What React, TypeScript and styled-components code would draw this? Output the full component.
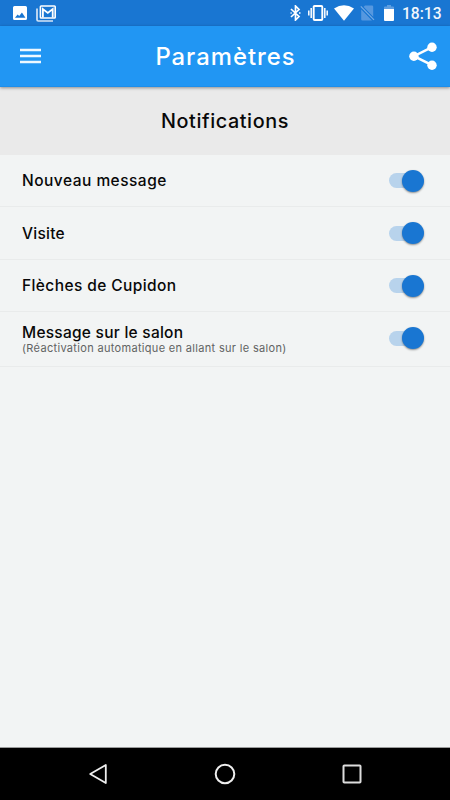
import React from "react";
import styled, { createGlobalStyle } from "styled-components";

const GlobalStyle = createGlobalStyle`
  * { box-sizing: border-box; }
  body { margin: 0; background: #f2f4f4; }
`;

const Screen = styled.div`
  width: 450px;
  height: 800px;
  display: flex;
  flex-direction: column;
  overflow: hidden;
  background: #f2f4f4;
  color: #080808;
  font-family: Inter, "Open Sans", sans-serif;
`;

const StatusBar = styled.header`
  height: 26px;
  flex: none;
  display: flex;
  align-items: center;
  justify-content: space-between;
  padding: 0 9px 0 13px;
  background: #1976d2;
`;

const StatusGroup = styled.div<{ $gap: number }>`
  display: flex;
  align-items: center;
  gap: ${(p) => p.$gap}px;
`;

const Glyph = styled.svg<{ $before?: number }>`
  display: block;
  flex: none;
  margin-left: ${(p) => p.$before ?? 0}px;
`;

const Clock = styled.time`
  width: 39px;
  margin-left: 8px;
  font: 500 15.6px/26px Roboto, sans-serif;
  padding-top: 1px;
  color: #f2f7fc;
  white-space: nowrap;
`;

const AppBar = styled.div`
  height: 61px;
  flex: none;
  display: grid;
  grid-template-columns: 60px 1fr 60px;
  align-items: center;
  background: #2196f3;
  border-bottom: 1px solid #1e8eea;
  box-shadow: 0 1px 3px rgba(0, 0, 0, 0.4);
  z-index: 1;
`;

const BarButton = styled.button<{ $align: "start" | "end" }>`
  display: flex;
  justify-content: ${(p) => p.$align};
  padding: ${(p) => (p.$align === "start" ? "0 0 0 20px" : "0 13px 0 0")};
  border: 0;
  background: none;
`;

const Title = styled.h1`
  margin: 0;
  padding: 1px 0 0 1px;
  text-align: center;
  font-size: 23.8px;
  font-weight: 500;
  line-height: 30px;
  letter-spacing: 1.02px;
  color: #fff;
`;

const SectionHeader = styled.h2`
  height: 68px;
  flex: none;
  margin: 0;
  display: flex;
  align-items: center;
  justify-content: center;
  background: #eaeaea;
  font-size: 19.8px;
  font-weight: 500;
  letter-spacing: 0.6px;
`;

const Row = styled.label<{ $height: number }>`
  height: ${(p) => p.$height}px;
  flex: none;
  display: flex;
  align-items: center;
  justify-content: space-between;
  padding: 0 26px 0 22px;
  border-bottom: 1px solid #e9ebeb;
`;

const Label = styled.span<{ $spacing: number }>`
  display: block;
  font-size: 15.5px;
  font-weight: 500;
  line-height: 19px;
  letter-spacing: ${(p) => p.$spacing}px;
`;

const Hint = styled.small`
  display: block;
  font-size: 11px;
  line-height: 13px;
  letter-spacing: 0.32px;
  color: #616363;
`;

const Track = styled.span<{ $lift: number }>`
  width: 35px;
  height: 22px;
  margin-bottom: ${(p) => p.$lift}px;
  display: flex;
  align-items: center;
  justify-content: flex-end;
`;

const Rail = styled.span`
  width: 30px;
  height: 15px;
  flex: none;
  margin-right: -17px;
  border-radius: 8px;
  background: #b8d3ec;
`;

const Knob = styled.span`
  width: 22px;
  height: 22px;
  flex: none;
  border-radius: 50%;
  background: #1976d2;
  box-shadow: 0 1px 2px rgba(0, 0, 0, 0.42);
`;

const Filler = styled.main`
  flex: 1;
`;

const NavBar = styled.nav`
  height: 53px;
  flex: none;
  display: flex;
  align-items: center;
  justify-content: space-between;
  padding: 0 88px;
  background: #000;
  border-top: 1px solid #9a9b9b;
`;

const settings = [
  { label: "Nouveau message", height: 52, spacing: 0.48, lift: 0 },
  { label: "Visite", height: 53, spacing: 0.25, lift: 0 },
  { label: "Flèches de Cupidon", height: 52, spacing: 0.4, lift: 0 },
  {
    label: "Message sur le salon",
    hint: "(Réactivation automatique en allant sur le salon)",
    height: 55,
    spacing: 0.25,
    lift: 2,
  },
];

const Toggle = ({ lift }: { lift: number }) => (
  <Track $lift={lift}>
    <Rail />
    <Knob />
  </Track>
);

export default function App() {
  return (
    <>
      <GlobalStyle />
      <Screen>
        <StatusBar>
          <StatusGroup $gap={9}>
            <Glyph width="14" height="14" viewBox="3 3 18 18" fill="#fff">
              <path d="M21 19V5a2 2 0 0 0-2-2H5a2 2 0 0 0-2 2v14a2 2 0 0 0 2 2h14a2 2 0 0 0 2-2zM5.500 18l3.500-4 2 2 3.500-4.500L19 18z" />
            </Glyph>
            <Glyph width="20" height="17" viewBox="0 0 20 17" fill="none" stroke="#fff">
              <path d="M1 3.500v11.200q0 1.300 1.300 1.300H17" stroke="#d5e5f6" strokeWidth="1.700" />
              <rect x="4.400" y="1" width="14.800" height="12" rx="0.800" strokeWidth="1.600" />
              <path d="M6.900 12.500V4l4.900 3.900L16.700 4v8.500" strokeWidth="1.800" />
            </Glyph>
          </StatusGroup>
          <StatusGroup $gap={0}>
            <Glyph width="11" height="16" viewBox="0 0 11 16" fill="none" stroke="#fff" strokeWidth="1.700">
              <path d="M1 4l8 7.500L5.500 15V1L9 4.500 1 12" />
              <path d="M.5 8h1.200M9 8h1.500" />
            </Glyph>
            <Glyph $before={7} width="20" height="16" viewBox="0 0 20 16" fill="none" stroke="#fff" strokeWidth="1.500">
              <rect x="5.700" y="1" width="8.600" height="14" rx="0.900" strokeWidth="1.900" />
              <path d="M3.200 3v10M.8 5.500v5M16.800 3v10M19.200 5.500v5" />
            </Glyph>
            <Glyph $before={6} width="20" height="16" viewBox="0 0 20 16" fill="#fff">
              <path d="M0 3.500Q10-3 20 3.500L10 15.800z" />
            </Glyph>
            <Glyph $before={6} width="15" height="16" viewBox="0 0 15 16">
              <path d="M5 .5h7q1.200 0 1.200 1.200V12L3.500 2zM1.200 4.200L12 15.400H2.400q-1.200 0-1.200-1.200z" fill="#5698df" />
              <path d="M.8 1.300l13.200 13.500" stroke="#1976d2" strokeWidth="3" />
              <path d="M.8 1.300l13.200 13.500" stroke="#75abe5" strokeWidth="1.200" />
            </Glyph>
            <Glyph $before={9} width="10" height="16" viewBox="0 0 10 16">
              <path d="M0 4V2.500q0-1 1-1h2V0h4v1.500h2q1 0 1 1V4z" fill="#5e9ee0" />
              <path d="M0 4h10v11q0 1-1 1H1q-1 0-1-1z" fill="#fff" />
            </Glyph>
            <Clock>18:13</Clock>
          </StatusGroup>
        </StatusBar>
        <AppBar>
          <BarButton $align="start" aria-label="Menu">
            <Glyph width="21" height="16" viewBox="0 0 21 16" fill="#eef8ff">
              <path d="M0 .7h21v2.600H0zM0 6.700h21v2.600H0zM0 12.700h21v2.600H0z" />
            </Glyph>
          </BarButton>
          <Title>Paramètres</Title>
          <BarButton $align="end" aria-label="Partager">
            <Glyph width="28" height="28" viewBox="0 0 28 28" fill="#fff">
              <path d="M23 5.200L5 14.200l18 9" fill="none" stroke="#fff" strokeWidth="2.500" />
              <circle cx="23" cy="5.200" r="4.700" />
              <circle cx="4.900" cy="14.200" r="4.700" />
              <circle cx="23" cy="23.200" r="4.700" />
            </Glyph>
          </BarButton>
        </AppBar>
        <SectionHeader>Notifications</SectionHeader>
        {settings.map((item) => (
          <Row key={item.label} $height={item.height}>
            <span>
              <Label $spacing={item.spacing}>{item.label}</Label>
              {item.hint && <Hint>{item.hint}</Hint>}
            </span>
            <Toggle lift={item.lift} />
          </Row>
        ))}
        <Filler />
        <NavBar>
          <Glyph width="20" height="22" viewBox="0 0 20 22" fill="none" stroke="#eee" strokeWidth="1.800">
            <path d="M17.800 2v18L2.200 11z" strokeLinejoin="round" />
          </Glyph>
          <Glyph width="22" height="22" viewBox="0 0 22 22" fill="none" stroke="#eee" strokeWidth="2">
            <circle cx="11" cy="11" r="9.300" />
          </Glyph>
          <Glyph width="20" height="20" viewBox="0 0 20 20" fill="none" stroke="#ddd" strokeWidth="2">
            <rect x="1.500" y="1.500" width="17" height="17" rx="0.800" />
          </Glyph>
        </NavBar>
      </Screen>
    </>
  );
}
